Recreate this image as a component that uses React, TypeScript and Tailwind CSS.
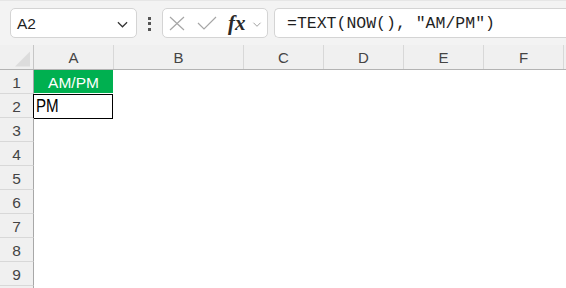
const columns = [
  { label: "A", w: "w-[80px]" },
  { label: "B", w: "w-[130px]" },
  { label: "C", w: "w-[80px]" },
  { label: "D", w: "w-[80px]" },
  { label: "E", w: "w-[80px]" },
  { label: "F", w: "w-[80px]" },
  { label: "", w: "w-[80px]" },
];

const rows = [1, 2, 3, 4, 5, 6, 7, 8, 9];

function Chevron({ className }: { className?: string }) {
  return (
    <svg viewBox="0 0 12 7" className={className} fill="none" stroke="currentColor" strokeWidth="1.3">
      <path d="M1 1 L6 6 L11 1" />
    </svg>
  );
}

function Toolbar() {
  return (
    <div className="h-[45px] bg-[#f3f3f3] border-t border-[#e6e6e6] flex items-start pt-[7px]">
      <div className="ml-[10px] w-[127px] h-[30px] bg-white border border-[#d4d4d4] rounded-[5px] flex items-center justify-between pl-[6px] pr-[8px]">
        <span className="text-[15.5px] text-[#1f1f1f] pt-[2px]">A2</span>
        <Chevron className="w-[11px] h-[7px] text-[#333] mt-[2px]" />
      </div>
      <div className="ml-[11px] w-[3px] h-[30px] flex flex-col items-center justify-center gap-[2.5px] pt-[1px]">
        <div className="w-[3px] h-[3px] bg-[#555]" />
        <div className="w-[3px] h-[3px] bg-[#555]" />
        <div className="w-[3px] h-[3px] bg-[#555]" />
      </div>
      <div className="ml-[11px] w-[106px] h-[30px] bg-white border border-[#d4d4d4] rounded-[5px] flex items-center pl-[6px]">
        <svg viewBox="0 0 16 15" className="w-[16px] h-[15px] text-[#a6a6a6]" fill="none" stroke="currentColor" strokeWidth="1.2">
          <path d="M1 1 L15 14 M15 1 L1 14" />
        </svg>
        <svg viewBox="0 0 20 14" className="ml-[12px] w-[20px] h-[14px] text-[#a6a6a6]" fill="none" stroke="currentColor" strokeWidth="1.2">
          <path d="M1 7 L7 13 L19 1" />
        </svg>
        <span className="ml-[11px] text-[21px] leading-none italic font-bold text-[#2a2a2a] font-['Liberation_Serif',serif]">
          fx
        </span>
        <Chevron className="ml-[6px] w-[10px] h-[5px] text-[#999] mt-[2px]" />
      </div>
      <div className="ml-[6px] flex-1 h-[30px] bg-white border border-r-0 border-[#d4d4d4] rounded-l-[5px] flex items-center pl-[12px]">
        <span className="text-[16.5px] text-[#1f1f1f] font-['Liberation_Mono',monospace] whitespace-pre pt-[3px]">
          =TEXT(NOW(), "AM/PM")
        </span>
      </div>
    </div>
  );
}

function HeaderRow() {
  return (
    <div className="flex h-[25px] bg-[#f0f0f0] border-b border-[#b3b3b3]">
      <div className="w-[34px] shrink-0 border-r border-[#c6c6c6] flex items-end justify-end pb-[2px] pr-[3px]">
        <svg viewBox="0 0 16 16" className="w-[15px] h-[16px]">
          <path d="M16 0 L16 16 L0 16 Z" fill="#dcdcdc" />
        </svg>
      </div>
      {columns.map((c, i) => (
        <div
          key={i}
          className={`${c.w} shrink-0 border-r border-[#d8d8d8] flex items-center justify-center text-[15px] text-[#444] pt-[2px]`}
        >
          {c.label}
        </div>
      ))}
    </div>
  );
}

function SheetRow({ n }: { n: number }) {
  return (
    <div className="flex h-[24px]">
      <div className="w-[34px] shrink-0 bg-[#f0f0f0] border-r border-b border-r-[#a8a8a8] border-b-[#d8d8d8] flex items-center justify-center text-[15.5px] text-[#444] pt-[3px]">
        {n}
      </div>
      {n === 1 && (
        <div className="w-[79px] shrink-0 h-[23px] bg-[#00b050] text-white text-[15.5px] flex items-center justify-center pt-[3px]">
          AM/PM
        </div>
      )}
      {n === 2 && (
        <div className="-ml-[1px] w-[80px] shrink-0 h-[25px] border border-black bg-white text-black flex items-center pl-[2px]">
          <span className="inline-block text-[18px] origin-left scale-x-[0.84]">PM</span>
        </div>
      )}
      <div className="flex-1" />
    </div>
  );
}

export default function App() {
  return (
    <div className="w-[566px] h-[288px] overflow-hidden bg-white font-['Liberation_Sans',sans-serif]">
      <Toolbar />
      <HeaderRow />
      {rows.map((n) => (
        <SheetRow key={n} n={n} />
      ))}
      <div className="flex h-[24px]">
        <div className="w-[34px] shrink-0 bg-[#f0f0f0] border-r border-[#a8a8a8]" />
      </div>
    </div>
  );
}
